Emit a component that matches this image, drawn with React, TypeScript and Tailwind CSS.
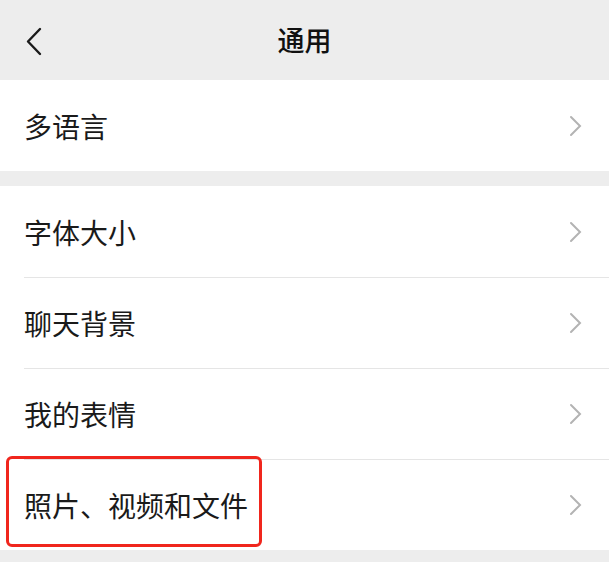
import React from "react";

const font = { fontFamily: '"Noto Sans CJK SC", "Noto Sans", sans-serif' };

function Chevron() {
  return (
    <svg width="14" height="22" viewBox="0 0 14 22" className="shrink-0">
      <path d="M2 2 L11 11 L2 20" fill="none" stroke="#b3b3b3" strokeWidth="2" strokeLinecap="round" />
    </svg>
  );
}

function Row({ label, first, highlight }: { label: string; first?: boolean; highlight?: boolean }) {
  return (
    <div className="relative h-[91px] pl-[24px]">
      <div className={`flex h-full items-center justify-between pr-[26px] ${first ? "" : "border-t border-[#e5e5e5]"}`}>
        <span className="text-[28px] leading-none text-[#1a1a1a]">{label}</span>
        <Chevron />
      </div>
      {highlight && (
        <div className="pointer-events-none absolute left-[6px] top-[-3px] h-[91px] w-[256px] rounded-[6px] border-[3px] border-[#f0261d]" />
      )}
    </div>
  );
}

export default function App() {
  return (
    <div className="h-[562px] w-[609px] overflow-hidden bg-[#ededed]" style={font}>
      <div className="relative flex h-[80px] items-center justify-center">
        <svg width="18" height="30" viewBox="0 0 18 30" className="absolute left-[25px] top-[27px]">
          <path d="M15 2 L3 14.5 L15 27" fill="none" stroke="#1a1a1a" strokeWidth="2.4" strokeLinecap="round" strokeLinejoin="round" />
        </svg>
        <span className="text-[27px] font-medium text-[#111]">通用</span>
      </div>

      <div className="bg-white">
        <Row label="多语言" first />
      </div>

      <div className="mt-[15px] bg-white">
        <Row label="字体大小" first />
        <Row label="聊天背景" />
        <Row label="我的表情" />
        <Row label="照片、视频和文件" highlight />
      </div>
    </div>
  );
}
